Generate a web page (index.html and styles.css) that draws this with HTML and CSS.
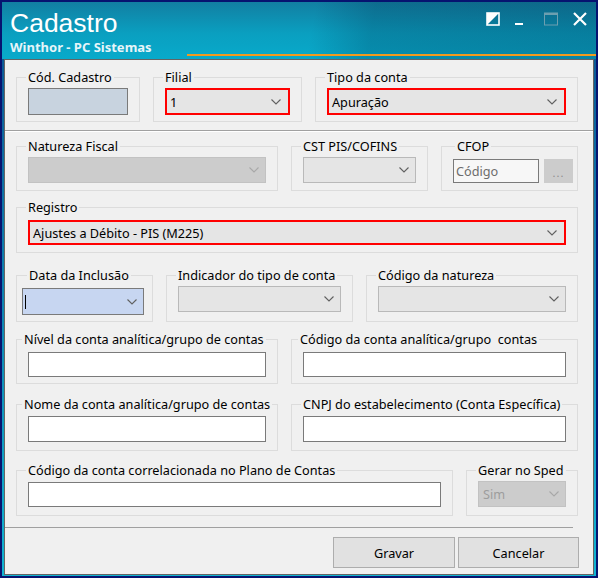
FILE: index.html
```html
<!DOCTYPE html>
<html lang="pt-BR">
<head>
  <meta charset="UTF-8">
  <title>Cadastro</title>
  <link rel="stylesheet" href="styles.css">
</head>
<body>
  <div class="window">
    <!-- Title bar -->
    <div class="titlebar">
      <div class="title">
        <h1>Cadastro</h1>
        <p>Winthor - PC Sistemas</p>
      </div>
      <div class="controls">
        <svg width="14" height="14" viewBox="0 0 14 14"><rect x="1" y="1" width="12" height="12" fill="none" stroke="#fff" stroke-width="1.6"/><polygon points="1,13 13,1 1,1" fill="#fff"/></svg>
        <svg width="14" height="14" viewBox="0 0 14 14"><rect x="0" y="11" width="8" height="2" fill="#fff"/></svg>
        <svg width="14" height="14" viewBox="0 0 14 14"><rect x="0.5" y="1" width="13" height="12" fill="none" stroke="#6c9fb0" stroke-width="1"/><rect x="0.5" y="1" width="13" height="2" fill="#6c9fb0"/></svg>
        <svg width="14" height="14" viewBox="0 0 14 14"><path d="M1 1 L13 13 M13 1 L1 13" stroke="#fff" stroke-width="2.2"/></svg>
      </div>
    </div>

    <div class="client">
      <!-- Header fields -->
      <div class="panel-top">
        <div class="row">
          <fieldset class="w-cod">
            <legend>Cód. Cadastro</legend>
            <div class="edit edit-key h27 mt3"></div>
          </fieldset>
          <fieldset class="w-filial">
            <legend>Filial</legend>
            <div class="combo marked h27 mt3"><span>1</span><svg class="chev" width="10" height="6" viewBox="0 0 10 6"><polyline points="0.5,0.5 5,5 9.5,0.5" fill="none" stroke="#606060" stroke-width="1.1"/></svg></div>
          </fieldset>
          <fieldset class="grow">
            <legend>Tipo da conta</legend>
            <div class="combo marked h27 mt3"><span>Apuração</span><svg class="chev" width="10" height="6" viewBox="0 0 10 6"><polyline points="0.5,0.5 5,5 9.5,0.5" fill="none" stroke="#606060" stroke-width="1.1"/></svg></div>
          </fieldset>
        </div>
      </div>

      <!-- Main fields -->
      <div class="panel-main">
        <div class="row r2">
          <fieldset class="w-half pb7">
            <legend>Natureza Fiscal</legend>
            <div class="combo disabled h26 mt3"><span></span><svg class="chev" width="10" height="6" viewBox="0 0 10 6"><polyline points="0.5,0.5 5,5 9.5,0.5" fill="none" stroke="#a8a8a8" stroke-width="1.1"/></svg></div>
          </fieldset>
          <fieldset class="w-cst pb7">
            <legend>CST PIS/COFINS</legend>
            <div class="combo h26 mt3"><span></span><svg class="chev" width="10" height="6" viewBox="0 0 10 6"><polyline points="0.5,0.5 5,5 9.5,0.5" fill="none" stroke="#606060" stroke-width="1.1"/></svg></div>
          </fieldset>
          <fieldset class="grow cfop pb7">
            <legend>CFOP</legend>
            <div class="cfop-line mt5">
              <div class="edit edit-hint">Código</div>
              <div class="dots">...</div>
            </div>
          </fieldset>
        </div>

        <div class="row r3">
          <fieldset class="grow pb7">
            <legend>Registro</legend>
            <div class="combo marked h25 mt5"><span>Ajustes a Débito - PIS (M225)</span><svg class="chev" width="10" height="6" viewBox="0 0 10 6"><polyline points="0.5,0.5 5,5 9.5,0.5" fill="none" stroke="#606060" stroke-width="1.1"/></svg></div>
          </fieldset>
        </div>

        <div class="row r4">
          <fieldset class="w-data pb6">
            <legend>Data da Inclusão</legend>
            <div class="combo date h27 mt5"><span class="caret"></span><svg class="chev" width="10" height="6" viewBox="0 0 10 6"><polyline points="0.5,0.5 5,5 9.5,0.5" fill="none" stroke="#606060" stroke-width="1.1"/></svg></div>
          </fieldset>
          <fieldset class="w-ind">
            <legend>Indicador do tipo de conta</legend>
            <div class="combo h26 mt3"><span></span><svg class="chev" width="10" height="6" viewBox="0 0 10 6"><polyline points="0.5,0.5 5,5 9.5,0.5" fill="none" stroke="#606060" stroke-width="1.1"/></svg></div>
          </fieldset>
          <fieldset class="grow">
            <legend>Código da natureza</legend>
            <div class="combo h26 mt3"><span></span><svg class="chev" width="10" height="6" viewBox="0 0 10 6"><polyline points="0.5,0.5 5,5 9.5,0.5" fill="none" stroke="#606060" stroke-width="1.1"/></svg></div>
          </fieldset>
        </div>

        <div class="row r5">
          <fieldset class="w-half pb6">
            <legend class="lg-near">Nível da conta analítica/grupo de contas</legend>
            <div class="edit h25 mt5"></div>
          </fieldset>
          <fieldset class="grow pb6">
            <legend class="lg-mid">Código da conta analítica/grupo&nbsp; contas</legend>
            <div class="edit h25 mt5"></div>
          </fieldset>
        </div>

        <div class="row r6">
          <fieldset class="w-half pb8">
            <legend class="lg-near">Nome da conta analítica/grupo de contas</legend>
            <div class="edit h26 mt4"></div>
          </fieldset>
          <fieldset class="grow pb8">
            <legend>CNPJ do estabelecimento (Conta Específica)</legend>
            <div class="edit h26 mt4"></div>
          </fieldset>
        </div>

        <div class="row r7">
          <fieldset class="w-plano pb8">
            <legend>Código da conta correlacionada no Plano de Contas</legend>
            <div class="edit h25 mt4"></div>
          </fieldset>
          <fieldset class="grow pb8">
            <legend>Gerar no Sped</legend>
            <div class="combo disabled h26 mt3"><span class="muted">Sim</span><svg class="chev" width="10" height="6" viewBox="0 0 10 6"><polyline points="0.5,0.5 5,5 9.5,0.5" fill="none" stroke="#a8a8a8" stroke-width="1.1"/></svg></div>
          </fieldset>
        </div>
      </div>

      <!-- Buttons -->
      <div class="footer">
        <div class="sep"></div>
        <div class="buttons">
          <button class="btn-save">Gravar</button>
          <button class="btn-cancel">Cancelar</button>
        </div>
      </div>
    </div>
  </div>
</body>
</html>
```

FILE: styles.css
```css
/* Page and window frame */
body {
  margin: 0;
  background: #ffffff;
  font-family: "Noto Sans", "Open Sans", sans-serif;
  font-size: 12.7px;
  color: #000;
}

.window {
  width: 598px;
  height: 578px;
  box-sizing: border-box;
  border: 2px solid #061370;
  background: linear-gradient(#0a4f8e, #10b4d2);
  display: flex;
  flex-direction: column;
}

/* Title bar */
.titlebar {
  height: 57px;
  flex: none;
  display: flex;
  justify-content: space-between;
  background:
    linear-gradient(#f39a1d, #f39a1d) 185px 52px / 100% 2px no-repeat,
    linear-gradient(100deg, rgba(0, 0, 0, 0) 52%, rgba(0, 40, 70, 0.22) 62%, rgba(0, 40, 70, 0.28) 100%),
    linear-gradient(#127fa2, #0a9fc0 55%, #08aacb);
}

.title {
  padding: 8px 0 0 8px;
  color: #fff;
}

.title h1 {
  margin: 0;
  font-family: "Liberation Sans", Arial, sans-serif;
  font-size: 26.5px;
  line-height: 26px;
  font-weight: normal;
}

.title p {
  margin: 3px 0 0;
  font-size: 13px;
  line-height: 16px;
  font-weight: bold;
  color: #e6f5f9;
}

.controls {
  display: flex;
  gap: 15px;
  padding: 10px 9px 0 0;
  align-items: flex-start;
}

/* Client area */
.client {
  flex: 1;
  margin: 0 2px 1px 2px;
  border: 1px solid #646464;
  background: #f0f0f0;
  display: flex;
  flex-direction: column;
}

.panel-top {
  padding: 9px 15px 8px 11px;
  border-bottom: 1px solid #a0a0a0;
  box-shadow: 0 1px 0 #ffffff;
}

.panel-main {
  padding: 7px 15px 0 11px;
  flex: 1;
}

.row {
  display: flex;
  gap: 13px;
}

.r3 { margin-top: 8px; }
.r4 { margin-top: 14px; }
.r5 { margin-top: 9px; }
.r6 { margin-top: 12px; }
.r7 { margin-top: 11px; }

/* Group boxes */
fieldset {
  margin: 0;
  min-width: 0;
  border: 1px solid #dcdcdc;
  padding: 0 11px 6px 11px;
  box-sizing: border-box;
}

legend {
  padding: 0 2px;
  margin-left: -2px;
  line-height: 16px;
  height: 16px;
  white-space: nowrap;
}

.lg-near { margin-left: -6px; }
.lg-mid { margin-left: -5px; }

.pb6 { padding-bottom: 6px; }
.pb7 { padding-bottom: 7px; }
.pb8 { padding-bottom: 8px; }

.grow { flex: 1; }
.w-cod { width: 124px; }
.w-filial { width: 149px; }
.w-half { width: 262px; }
.w-cst { width: 137px; }
.w-data { width: 137px; padding-left: 5px; }
.w-data legend { margin-left: 5px; }
.w-ind { width: 187px; }
.w-plano { width: 437px; }

.cfop { padding-right: 4px; }
.cfop legend { margin-left: 2px; }

.mt3 { margin-top: 3px; }
.mt4 { margin-top: 4px; }
.mt5 { margin-top: 5px; }
.h25 { height: 25px; }
.h26 { height: 26px; }
.h27 { height: 27px; }

/* Edits and combos */
.edit {
  box-sizing: border-box;
  background: #ffffff;
  border: 1px solid #7a7a7a;
}

.edit-key {
  width: 100px;
  background: #c8d3df;
}

.cfop-line {
  display: flex;
  gap: 5px;
  height: 24px;
}

.edit-hint {
  width: 86px;
  background: #f7f7f7;
  color: #6d6d6d;
  padding: 0 2px;
  line-height: 22px;
}

.dots {
  width: 29px;
  background: #cccccc;
  color: #8c8c8c;
  text-align: center;
  line-height: 28px;
  font-size: 11px;
  letter-spacing: 1px;
}

.combo {
  box-sizing: border-box;
  display: flex;
  align-items: center;
  justify-content: space-between;
  background: #e5e5e5;
  border: 1px solid #b9b9b9;
  padding: 0 6px 0 4px;
  white-space: nowrap;
}

.combo.marked {
  border: 2px solid #ff0000;
  padding: 0 7px 0 3px;
}

.combo.disabled {
  background: #cccccc;
  border-color: #c2c2c2;
}

.combo.date {
  width: 122px;
  background: #c7d6f1;
  border: 1px solid #7a7a7a;
  padding: 0 6px 0 2px;
}

.caret {
  display: block;
  height: 14px;
  border-left: 1px solid #000;
}

.muted {
  color: #9d9d9d;
}

.chev {
  flex: none;
}

/* Footer buttons */
.sep {
  margin: 11px 20px 0 0;
  border-top: 1px solid #a0a0a0;
}

.buttons {
  display: flex;
  justify-content: flex-end;
  gap: 3px;
  padding: 9px 14px 6px 0;
}

.buttons button {
  height: 31px;
  background: #e1e1e1;
  border: 1px solid #adadad;
  font-family: "Noto Sans", "Open Sans", sans-serif;
  font-size: 12.7px;
  color: #000;
  padding: 0;
}

.btn-save { width: 122px; }
.btn-cancel { width: 121px; }
```
